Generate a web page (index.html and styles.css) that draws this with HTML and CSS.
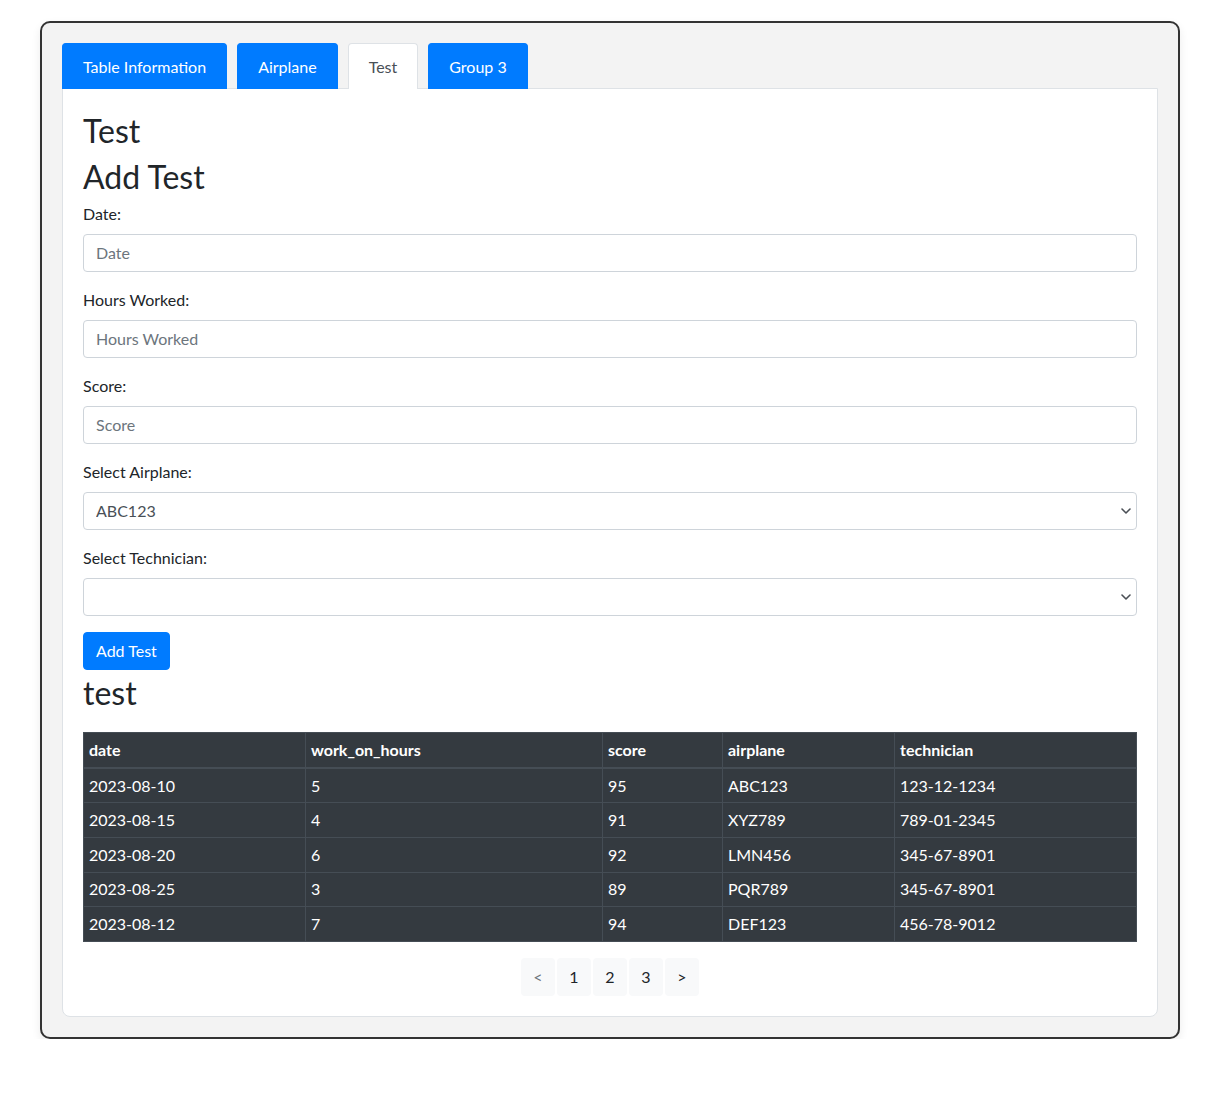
FILE: index.html
```html
<!DOCTYPE html>
<html lang="en">
<head>
<meta charset="utf-8">
<title>Test</title>
<link rel="stylesheet" href="styles.css">
</head>
<body>
<div class="frame">
  <div class="tabs">
    <button class="tab">Table Information</button>
    <button class="tab">Airplane</button>
    <button class="tab active">Test</button>
    <button class="tab">Group 3</button>
  </div>
  <div class="panel">
    <h2 class="heading">Test</h2>
    <h2 class="heading last">Add Test</h2>
    <div class="form">
      <div class="group">
        <label class="label">Date:</label>
        <input class="control" type="text" placeholder="Date">
      </div>
      <div class="group">
        <label class="label">Hours Worked:</label>
        <input class="control" type="text" placeholder="Hours Worked">
      </div>
      <div class="group">
        <label class="label">Score:</label>
        <input class="control" type="text" placeholder="Score">
      </div>
      <div class="group">
        <label class="label">Select Airplane:</label>
        <div class="select-wrap">
          <select class="control select"><option>ABC123</option></select>
          <svg class="chev" width="10" height="6" viewBox="0 0 10 6"><path d="M1 1 L5 5 L9 1" fill="none" stroke="#4a4f55" stroke-width="1.6" stroke-linecap="round" stroke-linejoin="round"/></svg>
        </div>
      </div>
      <div class="group">
        <label class="label">Select Technician:</label>
        <div class="select-wrap">
          <select class="control select"><option></option></select>
          <svg class="chev" width="10" height="6" viewBox="0 0 10 6"><path d="M1 1 L5 5 L9 1" fill="none" stroke="#4a4f55" stroke-width="1.6" stroke-linecap="round" stroke-linejoin="round"/></svg>
        </div>
      </div>
      <button class="btn">Add Test</button>
    </div>
    <h2 class="heading sub">test</h2>
    <table class="data">
      <colgroup>
        <col class="c1"><col class="c2"><col class="c3"><col class="c4"><col class="c5">
      </colgroup>
      <thead>
        <tr><th>date</th><th>work_on_hours</th><th>score</th><th>airplane</th><th>technician</th></tr>
      </thead>
      <tbody>
        <tr><td>2023-08-10</td><td>5</td><td>95</td><td>ABC123</td><td>123-12-1234</td></tr>
        <tr><td>2023-08-15</td><td>4</td><td>91</td><td>XYZ789</td><td>789-01-2345</td></tr>
        <tr><td>2023-08-20</td><td>6</td><td>92</td><td>LMN456</td><td>345-67-8901</td></tr>
        <tr><td>2023-08-25</td><td>3</td><td>89</td><td>PQR789</td><td>345-67-8901</td></tr>
        <tr><td>2023-08-12</td><td>7</td><td>94</td><td>DEF123</td><td>456-78-9012</td></tr>
      </tbody>
    </table>
    <div class="pager">
      <span class="page disabled">&lt;</span>
      <span class="page">1</span>
      <span class="page">2</span>
      <span class="page">3</span>
      <span class="page">&gt;</span>
    </div>
  </div>
</div>
</body>
</html>
```
FILE: styles.css
```css
* { box-sizing: border-box; }
html, body {
  margin: 0;
  padding: 0;
  background: #fff;
}
body {
  font-family: Lato, "Noto Sans", sans-serif;
  font-size: 16px;
  line-height: 1.5;
  color: #212529;
}
.frame {
  margin: 21px 0 0 40px;
  width: 1140px;
  padding: 20px;
  background: #f3f3f3;
  border: 2px solid #333;
  border-radius: 10px;
  box-shadow: 0 4px 10px rgba(0, 0, 0, 0.08);
}
.tabs {
  display: flex;
  gap: 10px;
  margin-bottom: -1px;
  position: relative;
  z-index: 1;
}
.tab {
  font: inherit;
  line-height: 24px;
  padding: 10px 20px;
  background: #007bff;
  color: #fff;
  border: 1px solid #007bff;
  border-bottom: none;
  border-radius: 4px 4px 0 0;
  cursor: pointer;
  height: 46px;
}
.tab.active {
  background: #fff;
  color: #495057;
  border-color: #dee2e6;
}
.panel {
  background: #fff;
  border: 1px solid #dee2e6;
  border-radius: 0 0 8px 8px;
  padding: 23px 20px 20px;
}
.heading {
  font-size: 32px;
  font-weight: 400;
  line-height: 1.2;
  margin: 0 0 8px;
}
.heading.last {
  margin-bottom: 5px;
}
.heading.sub {
  margin-top: 4px;
  margin-bottom: 20px;
}
.group {
  margin-bottom: 16px;
}
.label {
  display: inline-block;
  margin-bottom: 8px;
}
.control {
  display: block;
  width: 100%;
  height: 38px;
  padding: 6px 12px;
  font: inherit;
  line-height: 1.5;
  color: #495057;
  background: #fff;
  border: 1px solid #ced4da;
  border-radius: 4px;
  outline: none;
}
.control::placeholder {
  color: #6c757d;
}
.select-wrap {
  position: relative;
}
.select {
  appearance: none;
  -webkit-appearance: none;
}
.chev {
  position: absolute;
  right: 6px;
  top: 16px;
  pointer-events: none;
}
.btn {
  font: inherit;
  line-height: 24px;
  padding: 6px 12px;
  background: #007bff;
  color: #fff;
  border: 1px solid #007bff;
  border-radius: 4px;
  display: block;
}
.data {
  width: 1053px;
  border-collapse: collapse;
  background: #343a40;
  color: #fff;
  margin-bottom: 16px;
  table-layout: fixed;
}
.c1 { width: 222px; }
.c2 { width: 297px; }
.c3 { width: 120px; }
.c4 { width: 172px; }
.c5 { width: 242px; }
.data th, .data td {
  border: 1px solid #454d55;
  padding: 4.8px 5px;
  text-align: left;
  vertical-align: top;
  line-height: 24px;
}
.data th {
  font-weight: 700;
  border-bottom-width: 2px;
}
.pager {
  display: flex;
  justify-content: center;
  gap: 2px;
}
.page {
  display: block;
  min-width: 34px;
  height: 38px;
  line-height: 38px;
  padding: 0 12px;
  text-align: center;
  background: #f8f9fa;
  border-radius: 4px;
  color: #212529;
}
.page.disabled {
  color: #6c757d;
}
```
